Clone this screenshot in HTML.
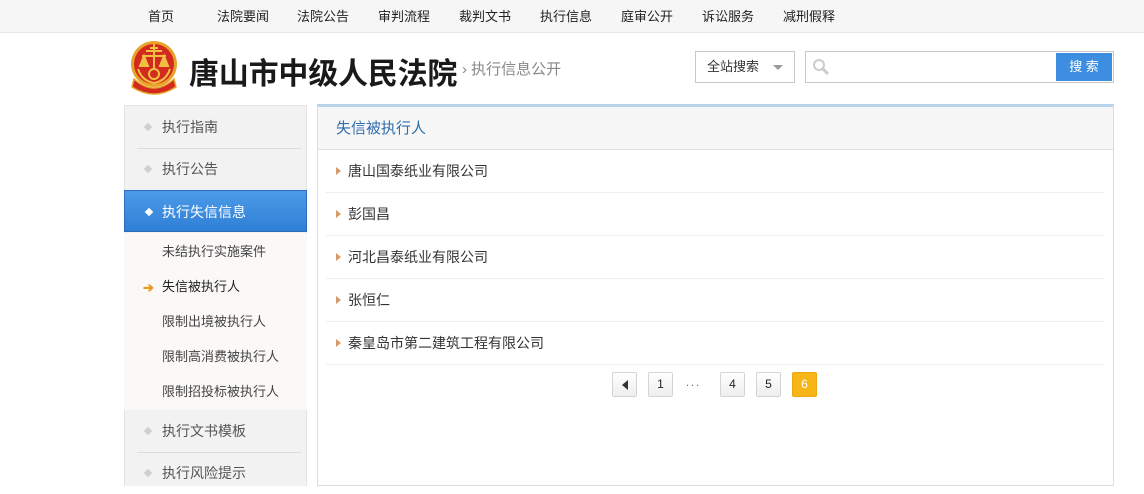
<!DOCTYPE html>
<html><head><meta charset="utf-8"><style>
*{margin:0;padding:0;box-sizing:border-box}
body{width:1144px;height:486px;overflow:hidden;background:#fff;font-family:"Liberation Sans","Noto Sans CJK SC",sans-serif;position:relative;color:#333}
.a{position:absolute}
.nav{left:0;top:0;width:1144px;height:33px;background:#f6f6f6;border-bottom:1px solid #e6e6e6}
.nav span{position:absolute;top:6px;font-size:13px;color:#222;transform:translateX(-50%);white-space:nowrap}
.side{left:124px;top:105px;width:183px;height:381px;background:#f2f2f2;border:1px solid #e4e4e4;border-bottom:none}
.si{position:absolute;left:0;width:181px;height:42px;font-size:14px;color:#555;padding-left:37px;line-height:42px}
.si i{position:absolute;left:20px;top:18px;width:6px;height:6px;background:#cfcfcf;transform:rotate(45deg)}
.sep{position:absolute;left:12px;width:164px;height:1px;background:#ddd}
.sub{position:absolute;font-size:13px;color:#444;left:37px}
.main{left:317px;top:104px;width:797px;height:382px;border:1px solid #dcdcdc;border-top:3px solid #b9d3ea}
.row{position:absolute;left:8px;width:778px;height:43px;border-bottom:1px solid #eee;font-size:14px;color:#333;line-height:43px;padding-left:22px}
.row i{position:absolute;left:10px;top:17px;border-left:5px solid #d59a6a;border-top:4.5px solid transparent;border-bottom:4.5px solid transparent}
.pg{position:absolute;top:372px;width:25px;height:25px;border:1px solid #d4d4d4;background:linear-gradient(#fff,#eee);font-size:12px;text-align:center;line-height:23px;color:#222;border-radius:2px}
</style></head><body>
<div class="a nav">
<span style="left:161px">首页</span><span style="left:243px">法院要闻</span><span style="left:323px">法院公告</span><span style="left:404px">审判流程</span><span style="left:485px">裁判文书</span><span style="left:566px">执行信息</span><span style="left:647px">庭审公开</span><span style="left:728px">诉讼服务</span><span style="left:809px">减刑假释</span>
</div>
<svg class="a" style="left:130px;top:39px" width="50" height="56" viewBox="0 0 50 56">
<circle cx="24" cy="25" r="23" fill="#e8a32a"/><circle cx="24" cy="25" r="20" fill="#d22a1e"/>
<path d="M4 40 Q24 58 44 40 L46 48 Q24 62 2 48Z" fill="#d22a1e" stroke="#e8a32a" stroke-width="1.5"/>
<path d="M24 5 L24 30 M16 12 L32 12 M20 9 L28 9 M12 17 L36 17 M14 17 L10 27 L18 27Z M34 17 L30 27 L38 27Z" stroke="#f2c040" stroke-width="2" fill="#f2c040"/>
<circle cx="24" cy="35" r="5" fill="none" stroke="#f2c040" stroke-width="2"/>
<path d="M8 30 Q12 42 24 44 Q36 42 40 30" stroke="#f2c040" stroke-width="2" fill="none"/>
</svg>
<div class="a" style="left:189px;top:49px;font-size:30px;font-weight:bold;color:#1a1a1a;letter-spacing:-0.2px;white-space:nowrap">唐山市中级人民法院</div>
<div class="a" style="left:462px;top:58px;font-size:15px;color:#888;white-space:nowrap">› 执行信息公开</div>
<div class="a" style="left:695px;top:51px;width:100px;height:32px;border:1px solid #c8c8c8;font-size:13px;color:#333;line-height:30px;padding-left:11px">全站搜索<span style="position:absolute;left:77px;top:13px;border-top:5px solid #999;border-left:5px solid transparent;border-right:5px solid transparent"></span></div>
<div class="a" style="left:805px;top:51px;width:309px;height:32px;border:1px solid #c8c8c8">
<svg style="position:absolute;left:6px;top:6px" width="18" height="18"><circle cx="7" cy="7" r="5" fill="none" stroke="#ccc" stroke-width="2"/><path d="M11 11 L16 16" stroke="#ccc" stroke-width="3"/></svg>
<div style="position:absolute;right:1px;top:1px;width:56px;height:28px;background:#3d8de0;color:#fff;font-size:13px;text-align:center;line-height:28px">搜 索</div></div>
<div class="a side">
<div class="si" style="top:0"><i></i>执行指南</div><div class="sep" style="top:42px"></div>
<div class="si" style="top:42px"><i></i>执行公告</div>
<div class="si" style="top:84px;background:linear-gradient(#4c9be8,#2f7fd6);color:#fff;border:1px solid #2a6dbb;left:-1px;width:183px"><i style="background:#fff;left:21px"></i>执行失信信息</div>
<div style="position:absolute;left:-1px;top:127px;width:183px;height:177px;background:#fbf9f7"></div>
<div class="sub" style="top:135px">未结执行实施案件</div>
<div class="sub" style="top:170px;color:#222">失信被执行人</div>
<div style="position:absolute;left:18px;top:174px;color:#e89a20;font-size:13px;font-weight:bold">➔</div>
<div class="sub" style="top:205px">限制出境被执行人</div>
<div class="sub" style="top:240px">限制高消费被执行人</div>
<div class="sub" style="top:275px">限制招投标被执行人</div>
<div class="si" style="top:304px"><i></i>执行文书模板</div><div class="sep" style="top:346px"></div>
<div class="si" style="top:346px"><i></i>执行风险提示</div>
</div>
<div class="a main">
<div style="position:absolute;left:0;top:0;width:795px;height:43px;background:#f7f7f7;border-bottom:1px solid #e2e2e2;font-size:15px;color:#2f6dab;line-height:43px;padding-left:18px">失信被执行人</div>
<div class="row" style="top:43px"><i></i>唐山国泰纸业有限公司</div>
<div class="row" style="top:86px"><i></i>彭国昌</div>
<div class="row" style="top:129px"><i></i>河北昌泰纸业有限公司</div>
<div class="row" style="top:172px"><i></i>张恒仁</div>
<div class="row" style="top:215px"><i></i>秦皇岛市第二建筑工程有限公司</div>
</div>
<div class="pg" style="left:612px"><span style="display:inline-block;margin-top:7px;border-right:6px solid #333;border-top:5px solid transparent;border-bottom:5px solid transparent"></span></div>
<div class="pg" style="left:648px">1</div>
<div class="a" style="left:686px;top:377px;font-size:11px;color:#666;letter-spacing:2px">...</div>
<div class="pg" style="left:720px">4</div>
<div class="pg" style="left:756px">5</div>
<div class="pg" style="left:792px;background:#f7b518;border-color:#eaa80c;color:#fff">6</div>
</body></html>
